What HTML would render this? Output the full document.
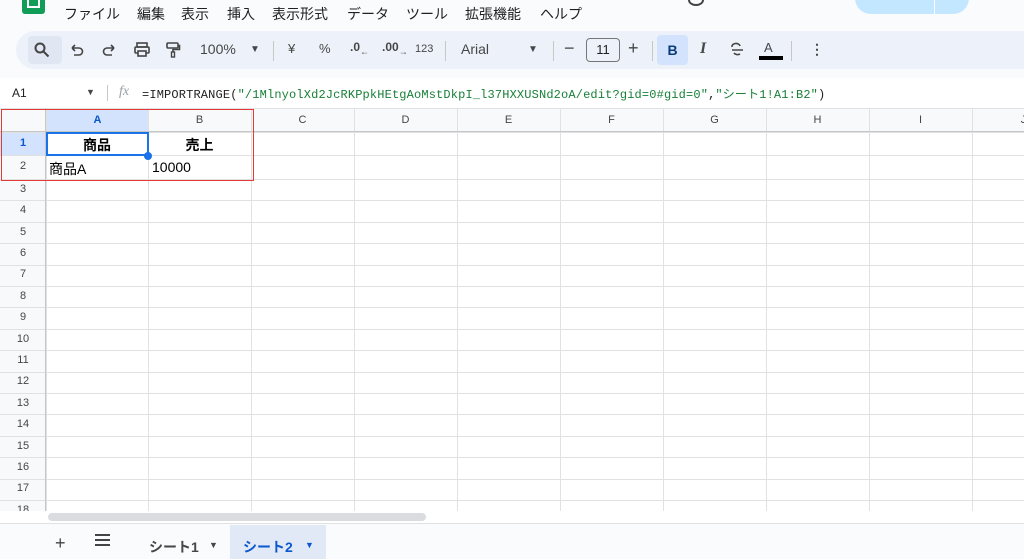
<!DOCTYPE html>
<html><head><meta charset="utf-8">
<style>
*{margin:0;padding:0;box-sizing:border-box}
html,body{width:1024px;height:559px;overflow:hidden}
body{background:#f9fbfd;font-family:"Liberation Sans","Noto Sans CJK JP",sans-serif;position:relative;color:#444746}
.a{position:absolute}
.menu span{position:absolute;top:4px;font-size:14px;color:#1f1f1f}
.tb{position:absolute;top:31px;left:16px;width:1010px;height:38px;background:#edf2fa;border-radius:19px 0 0 19px}
.ti{position:absolute;top:41px;font-size:14px;color:#444746}
.sep{position:absolute;top:41px;width:1px;height:20px;background:#c7c7c7}
.fb{position:absolute;top:78px;left:0;width:1024px;height:30px;background:#fff}
.grid{position:absolute;top:108px;left:0;width:1024px;height:403px;background:#fff;overflow:hidden}
.hl{position:absolute;left:0;width:1024px;height:1px;background:#e1e1e1}
.vl{position:absolute;top:0;width:1px;height:403px;background:#e1e1e1}
.rn{position:absolute;left:0;width:46px;text-align:center;font-size:11px;color:#444746}
.cn{position:absolute;top:6px;width:103px;text-align:center;font-size:11px;color:#444746}
</style></head><body>
<div class="a" style="left:22px;top:0;width:23px;height:14px;background:#0f9d58;border-radius:0 0 3px 3px"></div>
<div class="a" style="left:27px;top:0;width:13px;height:8px;border:2px solid #fff;border-top:none"></div>
<div class="menu">
<span style="left:64px">ファイル</span><span style="left:137px">編集</span><span style="left:181px">表示</span><span style="left:227px">挿入</span><span style="left:272px">表示形式</span><span style="left:347px">データ</span><span style="left:406px">ツール</span><span style="left:465px">拡張機能</span><span style="left:540px">ヘルプ</span>
</div>
<div class="a" style="left:855px;top:-6px;width:114px;height:20px;background:#c2e7ff;border-radius:0 0 16px 16px"></div>
<div class="a" style="left:934px;top:0;width:1px;height:14px;background:#fff"></div>
<div class="a" style="left:688px;top:-6px;width:16px;height:12px;border:2px solid #444;border-radius:50%"></div>
<div class="tb"></div>
<div class="a" style="left:28px;top:36px;width:34px;height:28px;background:#e1e7f2;border-radius:4px"></div>
<svg class="a" style="left:34px;top:42px" width="16" height="16"><circle cx="6" cy="6" r="4.5" fill="none" stroke="#444" stroke-width="2"/><path d="M9.5 9.5l5 5" stroke="#444" stroke-width="2"/></svg>
<svg class="a" style="left:69px;top:43px" width="16" height="14"><path d="M3 5h7a3.5 3.5 0 010 7H5M3 5l3-3M3 5l3 3" fill="none" stroke="#444" stroke-width="1.6"/></svg>
<svg class="a" style="left:101px;top:43px" width="16" height="14"><path d="M13 5H6a3.5 3.5 0 000 7h5M13 5l-3-3M13 5l-3 3" fill="none" stroke="#444" stroke-width="1.6"/></svg>
<svg class="a" style="left:133px;top:41px" width="18" height="18"><rect x="4" y="2" width="10" height="4" fill="none" stroke="#444" stroke-width="1.6"/><rect x="2" y="6" width="14" height="6" rx="1" fill="none" stroke="#444" stroke-width="1.6"/><rect x="5" y="10" width="8" height="5" fill="#edf2fa" stroke="#444" stroke-width="1.6"/></svg>
<svg class="a" style="left:165px;top:41px" width="16" height="18"><rect x="2" y="2" width="11" height="5" rx="1" fill="none" stroke="#444" stroke-width="1.6"/><path d="M13 4.5h1.5v4H8v3" fill="none" stroke="#444" stroke-width="1.6"/><rect x="6.5" y="11" width="3" height="5" fill="none" stroke="#444" stroke-width="1.4"/></svg>
<span class="ti" style="left:200px">100%</span><span class="ti" style="left:250px;font-size:10px;top:44px">▼</span>
<div class="sep" style="left:273px"></div>
<span class="ti" style="left:288px;font-size:13px">¥</span>
<span class="ti" style="left:319px;font-size:13px">%</span>
<span class="ti" style="left:350px;font-size:12px;top:40px;font-weight:bold">.0<sub style="font-size:9px">←</sub></span>
<span class="ti" style="left:382px;font-size:12px;top:40px;font-weight:bold">.00<sub style="font-size:9px">→</sub></span>
<span class="ti" style="left:415px;font-size:11px;top:43px">123</span>
<div class="sep" style="left:445px"></div>
<span class="ti" style="left:461px">Arial</span><span class="ti" style="left:528px;font-size:10px;top:44px">▼</span>
<div class="sep" style="left:553px"></div>
<span class="ti" style="left:564px;font-size:18px;top:38px">−</span>
<div class="a" style="left:586px;top:38px;width:34px;height:24px;border:1px solid #747775;border-radius:4px;font-size:13px;text-align:center;line-height:22px;color:#1f1f1f">11</div>
<span class="ti" style="left:628px;font-size:18px;top:38px">+</span>
<div class="sep" style="left:652px"></div>
<div class="a" style="left:657px;top:35px;width:31px;height:30px;background:#d3e3fd;border-radius:4px;text-align:center;line-height:30px;font-weight:bold;font-size:14px;color:#0b3c7a">B</div>
<span class="ti" style="left:700px;font-style:italic;font-weight:bold;font-family:'Liberation Serif',serif;font-size:16px;top:40px">I</span>
<svg class="a" style="left:728px;top:42px" width="18" height="16"><path d="M4 5a4 3 0 018-1M4 8h11M6 11a4 3 0 006 1" fill="none" stroke="#444" stroke-width="1.6"/></svg>
<span class="ti" style="left:764px;top:40px;font-size:13px">A</span>
<div class="a" style="left:759px;top:56px;width:24px;height:4px;background:#000"></div>
<div class="sep" style="left:791px"></div>
<span class="ti" style="left:810px;font-weight:bold">⋮</span>
<div class="fb"></div>
<span class="a" style="left:12px;top:86px;font-size:12px;color:#1f1f1f">A1</span>
<span class="a" style="left:86px;top:87px;font-size:9px">▼</span>
<div class="a" style="left:107px;top:85px;width:1px;height:16px;background:#c7c7c7"></div>
<span class="a" style="left:119px;top:84px;font-size:14px;font-style:italic;color:#9aa0a6;font-family:'Liberation Serif',serif">fx</span>
<span class="a" style="left:142px;top:85px;font-size:12px;font-family:'Liberation Mono','Noto Sans CJK JP',monospace;color:#1f1f1f;letter-spacing:0.15px;white-space:nowrap">=IMPORTRANGE(<span style="color:#188038">"/1MlnyolXd2JcRKPpkHEtgAoMstDkpI_l37HXXUSNd2oA/edit?gid=0#gid=0"</span>,<span style="color:#188038">"シート1!A1:B2"</span>)</span>
<div class="grid" id="g">
<div class="a" style="left:0;top:0;width:1024px;height:24px;background:#f8f9fa"></div>
<div class="a" style="left:0;top:0;width:46px;height:403px;background:#f8f9fa"></div>
<div class="a" style="left:46px;top:0;width:102px;height:24px;background:#d3e3fd"></div>
<div class="a" style="left:0;top:24px;width:46px;height:23px;background:#d3e3fd"></div>
</div>
<div class="a" style="left:0;top:511px;width:1024px;height:13px;background:#fff"></div>
<div class="a" style="left:48px;top:513px;width:378px;height:8px;background:#dadce0;border-radius:4px"></div>
<div class="a" style="left:0;top:523px;width:1024px;height:1px;background:#e1e1e1"></div>
<div class="a" style="left:230px;top:525px;width:96px;height:34px;background:#e1e9f7"></div>
<span class="a" style="left:55px;top:533px;font-size:18px;color:#444">+</span>
<div class="a" style="left:95px;top:539px;width:15px;height:2px;background:#444;box-shadow:0 -5px 0 #444,0 5px 0 #444"></div>
<span class="a" style="left:149px;top:537px;font-size:14px;font-weight:bold;color:#444746">シート1</span><span class="a" style="left:209px;top:540px;font-size:9px">▼</span>
<span class="a" style="left:243px;top:537px;font-size:14px;font-weight:bold;color:#0b57d0">シート2</span><span class="a" style="left:305px;top:540px;font-size:9px;color:#0b57d0">▼</span>
<script>
var g=document.getElementById('g'),h='';
var ys=[0,24,47,71];for(var i=1;i<20;i++)ys.push(71+i*21.4);
ys.forEach(function(y){h+='<div class="hl" style="top:'+Math.round(y)+'px"></div>'});
for(var r=0;r<19;r++){var t=ys[r+1],b=ys[r+2];h+='<div class="rn" style="top:'+Math.round((t+b)/2-7)+'px;'+(r==0?'font-weight:bold;color:#0b57d0':'')+'">'+(r+1)+'</div>'}
var xs=[46,148,251,354,457,560,663,766,869,972,1075];
xs.forEach(function(x){h+='<div class="vl" style="left:'+x+'px"></div>'});
'ABCDEFGHIJ'.split('').forEach(function(c,i){h+='<div class="cn" style="left:'+xs[i]+'px;'+(i==0?'color:#0b57d0;font-weight:bold':'')+'">'+c+'</div>'});
h+='<div class="a" style="left:45px;top:0;width:1px;height:403px;background:#c4c7c5"></div>';
h+='<div class="a" style="left:0;top:23px;width:1024px;height:1px;background:#c4c7c5"></div>';
h+='<div class="a" style="left:46px;top:24px;width:103px;height:24px;border:2px solid #1a73e8"></div>';
h+='<div class="a" style="left:144px;top:44px;width:8px;height:8px;border-radius:50%;background:#1a73e8"></div>';
h+='<div class="a" style="left:46px;top:27px;width:102px;text-align:center;font-size:14px;font-weight:bold;color:#000">商品</div>';
h+='<div class="a" style="left:148px;top:27px;width:103px;text-align:center;font-size:14px;font-weight:bold;color:#000">売上</div>';
h+='<div class="a" style="left:49px;top:51px;font-size:14px;color:#000">商品A</div>';
h+='<div class="a" style="left:152px;top:51px;font-size:14px;color:#000">10000</div>';
h+='<div class="a" style="left:1px;top:1px;width:253px;height:72px;border:1px solid #e53935"></div>';
g.innerHTML+=h;
</script>
</body></html>
